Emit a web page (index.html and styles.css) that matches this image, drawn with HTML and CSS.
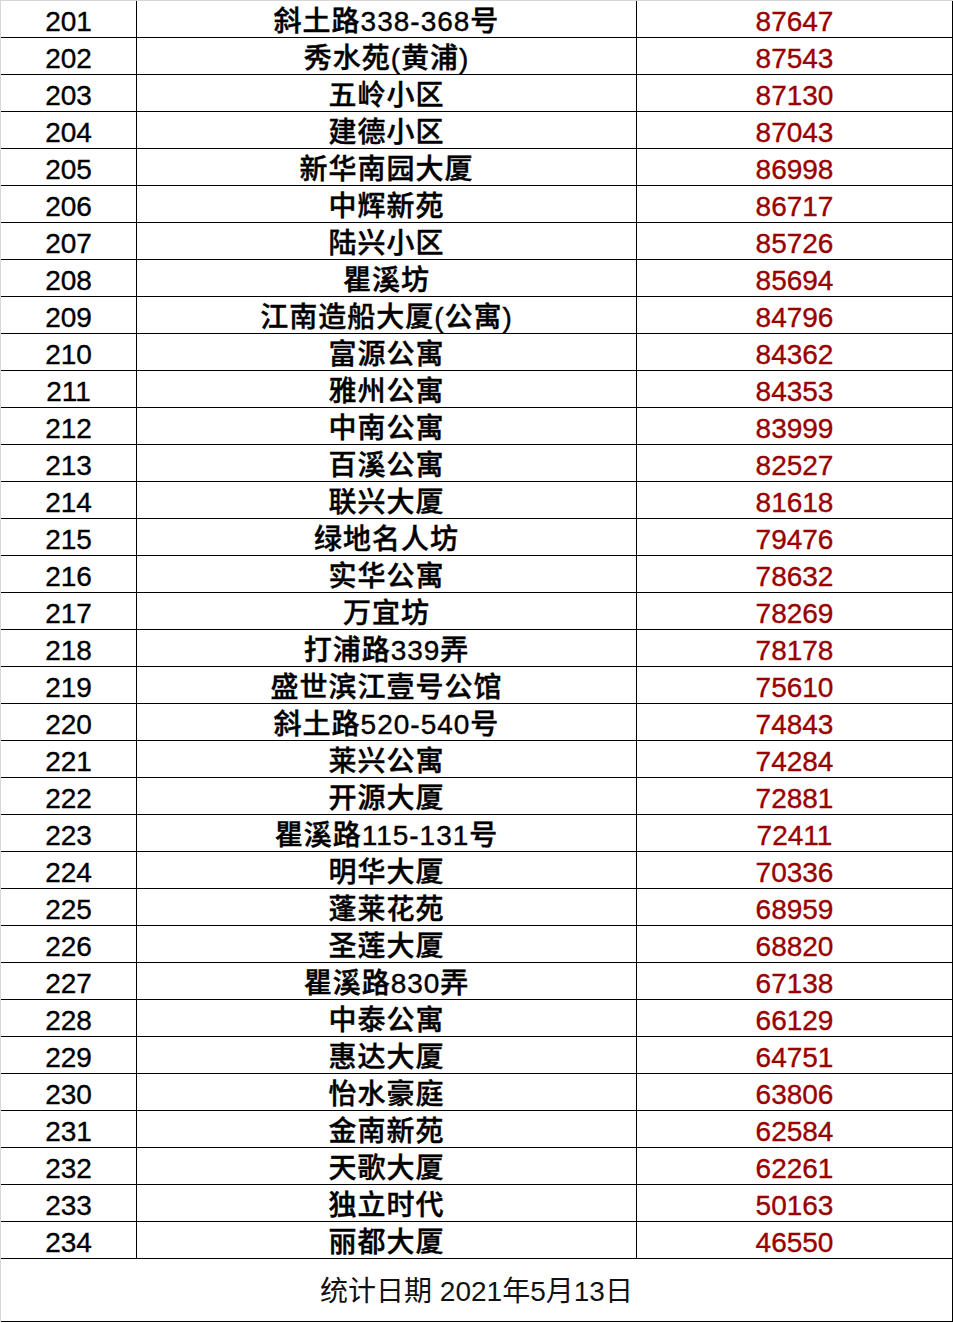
FILE: index.html
```html
<!DOCTYPE html>
<html lang="zh-CN">
<head>
<meta charset="utf-8">
<title>小区列表</title>
<link rel="stylesheet" href="styles.css">
</head>
<body>
<div class="sheet">
  <div class="row"><div class="cell no">201</div><div class="cell name">斜土路338-368号</div><div class="cell val">87647</div></div>
  <div class="row"><div class="cell no">202</div><div class="cell name">秀水苑(黄浦)</div><div class="cell val">87543</div></div>
  <div class="row"><div class="cell no">203</div><div class="cell name">五岭小区</div><div class="cell val">87130</div></div>
  <div class="row"><div class="cell no">204</div><div class="cell name">建德小区</div><div class="cell val">87043</div></div>
  <div class="row"><div class="cell no">205</div><div class="cell name">新华南园大厦</div><div class="cell val">86998</div></div>
  <div class="row"><div class="cell no">206</div><div class="cell name">中辉新苑</div><div class="cell val">86717</div></div>
  <div class="row"><div class="cell no">207</div><div class="cell name">陆兴小区</div><div class="cell val">85726</div></div>
  <div class="row"><div class="cell no">208</div><div class="cell name">瞿溪坊</div><div class="cell val">85694</div></div>
  <div class="row"><div class="cell no">209</div><div class="cell name">江南造船大厦(公寓)</div><div class="cell val">84796</div></div>
  <div class="row"><div class="cell no">210</div><div class="cell name">富源公寓</div><div class="cell val">84362</div></div>
  <div class="row"><div class="cell no">211</div><div class="cell name">雅州公寓</div><div class="cell val">84353</div></div>
  <div class="row"><div class="cell no">212</div><div class="cell name">中南公寓</div><div class="cell val">83999</div></div>
  <div class="row"><div class="cell no">213</div><div class="cell name">百溪公寓</div><div class="cell val">82527</div></div>
  <div class="row"><div class="cell no">214</div><div class="cell name">联兴大厦</div><div class="cell val">81618</div></div>
  <div class="row"><div class="cell no">215</div><div class="cell name">绿地名人坊</div><div class="cell val">79476</div></div>
  <div class="row"><div class="cell no">216</div><div class="cell name">实华公寓</div><div class="cell val">78632</div></div>
  <div class="row"><div class="cell no">217</div><div class="cell name">万宜坊</div><div class="cell val">78269</div></div>
  <div class="row"><div class="cell no">218</div><div class="cell name">打浦路339弄</div><div class="cell val">78178</div></div>
  <div class="row"><div class="cell no">219</div><div class="cell name">盛世滨江壹号公馆</div><div class="cell val">75610</div></div>
  <div class="row"><div class="cell no">220</div><div class="cell name">斜土路520-540号</div><div class="cell val">74843</div></div>
  <div class="row"><div class="cell no">221</div><div class="cell name">莱兴公寓</div><div class="cell val">74284</div></div>
  <div class="row"><div class="cell no">222</div><div class="cell name">开源大厦</div><div class="cell val">72881</div></div>
  <div class="row"><div class="cell no">223</div><div class="cell name">瞿溪路115-131号</div><div class="cell val">72411</div></div>
  <div class="row"><div class="cell no">224</div><div class="cell name">明华大厦</div><div class="cell val">70336</div></div>
  <div class="row"><div class="cell no">225</div><div class="cell name">蓬莱花苑</div><div class="cell val">68959</div></div>
  <div class="row"><div class="cell no">226</div><div class="cell name">圣莲大厦</div><div class="cell val">68820</div></div>
  <div class="row"><div class="cell no">227</div><div class="cell name">瞿溪路830弄</div><div class="cell val">67138</div></div>
  <div class="row"><div class="cell no">228</div><div class="cell name">中泰公寓</div><div class="cell val">66129</div></div>
  <div class="row"><div class="cell no">229</div><div class="cell name">惠达大厦</div><div class="cell val">64751</div></div>
  <div class="row"><div class="cell no">230</div><div class="cell name">怡水豪庭</div><div class="cell val">63806</div></div>
  <div class="row"><div class="cell no">231</div><div class="cell name">金南新苑</div><div class="cell val">62584</div></div>
  <div class="row"><div class="cell no">232</div><div class="cell name">天歌大厦</div><div class="cell val">62261</div></div>
  <div class="row"><div class="cell no">233</div><div class="cell name">独立时代</div><div class="cell val">50163</div></div>
  <div class="row"><div class="cell no">234</div><div class="cell name">丽都大厦</div><div class="cell val">46550</div></div>
  <div class="footer">统计日期 2021年5月13日</div>
</div>
</body>
</html>
```
FILE: styles.css
```css
html, body {
  margin: 0;
  padding: 0;
  background: #ffffff;
}

.sheet {
  width: 953px;
  box-sizing: border-box;
  border-top: 1px solid #d6d6d6;
  border-left: 1px solid #d6d6d6;
  font-family: "Liberation Sans", "Noto Sans CJK SC", sans-serif;
  color: #000000;
}

.row {
  display: grid;
  grid-template-columns: 136px 500px 316px;
  height: 37px;
  box-sizing: border-box;
  border-bottom: 1px solid #000000;
}

.cell {
  box-sizing: border-box;
  border-right: 1px solid #000000;
  height: 36px;
  padding-top: 5px;
  line-height: 31px;
  font-size: 28px;
  text-align: center;
  white-space: nowrap;
  overflow: hidden;
}

.no {
  -webkit-text-stroke: 0.35px #000000;
}

.name {
  font-weight: 500;
  letter-spacing: 1px;
  -webkit-text-stroke: 0.4px #000000;
}

.val {
  color: #990000;
  -webkit-text-stroke: 0.35px #990000;
}

.footer {
  height: 63px;
  box-sizing: border-box;
  border-right: 1px solid #000000;
  border-bottom: 1px solid #000000;
  padding-top: 4px;
  line-height: 58px;
  font-size: 28px;
  text-align: center;
  color: #111111;
}
```
